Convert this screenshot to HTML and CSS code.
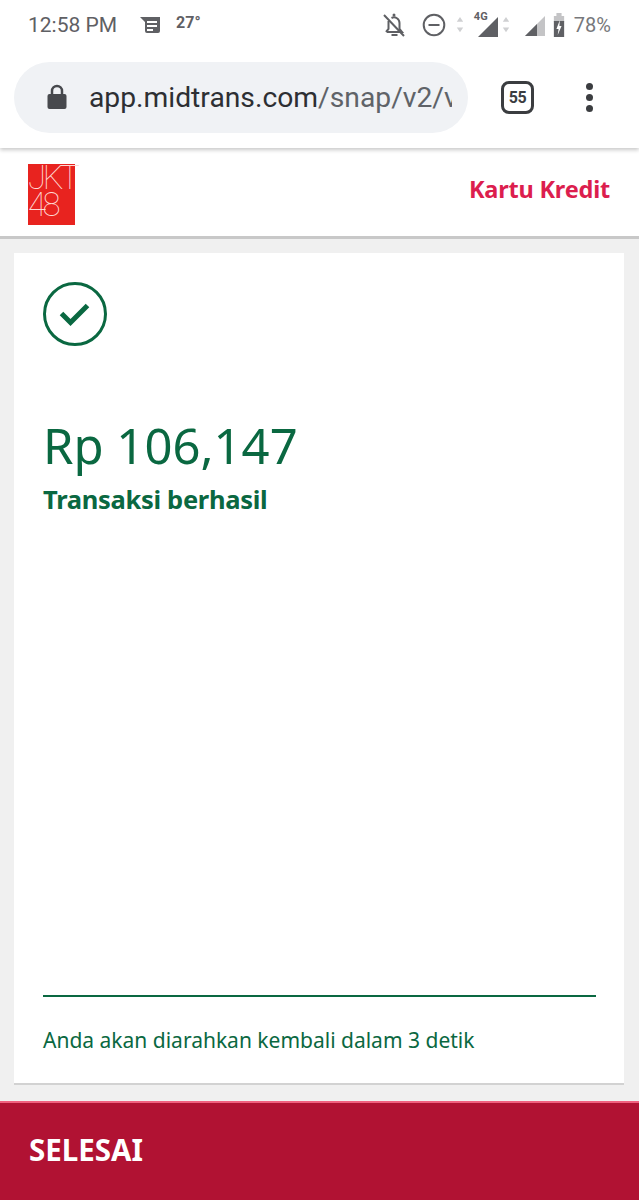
FILE: index.html
```html
<!DOCTYPE html>
<html lang="id">
<head>
    <meta charset="UTF-8">
    <meta name="viewport" content="width=device-width, initial-scale=1.0">
    <title>Transaksi berhasil</title>
    <link rel="stylesheet" href="styles.css">
</head>
<body>
    <div class="statusbar">
        <span class="time">12:58 PM</span>
        <svg class="news-icon" width="22" height="18" viewBox="0 0 22 18">
            <path fill="#5f6064" d="M1 1h20v14a2 2 0 0 1-2 2H8a2 2 0 0 1-2-2V6z"/>
            <path stroke="#fff" stroke-width="2" d="M8 6h10M8 10h10M8 14h6"/>
        </svg>
        <span class="temp">27°</span>
        <span class="spacer"></span>
        <svg class="bell-icon" width="24" height="26" viewBox="0 0 24 26">
            <path fill="none" stroke="#5f6064" stroke-width="2" d="M5 20h15l-2.500-3v-6a5.500 5.500 0 0 0-8-5M6.500 9v8L4 20"/>
            <path stroke="#5f6064" stroke-width="2" d="M2 3l20 21M9.500 23h6"/>
            <circle cx="12" cy="3" r="1.500" fill="#5f6064"/>
        </svg>
        <svg class="dnd-icon" width="24" height="24" viewBox="0 0 24 24">
            <circle cx="12" cy="12" r="10.300" fill="none" stroke="#5f6064" stroke-width="2"/>
            <path stroke="#5f6064" stroke-width="2" d="M6.500 12h11"/>
        </svg>
        <svg class="arrows arrows-first" width="8" height="18" viewBox="0 0 10 22">
            <path fill="#cfd0d2" d="M5 1l4 6H1zM1 14h8l-4 6z"/>
        </svg>
        <div class="signal-4g">
            <span class="net">4G</span>
            <svg width="22" height="22" viewBox="0 0 22 22"><path fill="#5f6064" d="M21 1v20H1z"/></svg>
        </div>
        <svg class="arrows" width="8" height="18" viewBox="0 0 10 22">
            <path fill="#cfd0d2" d="M5 1l4 6H1zM1 14h8l-4 6z"/>
        </svg>
        <svg class="signal-2" width="22" height="22" viewBox="0 0 22 22">
            <path fill="#c4c4c6" d="M21 1v20H1z"/>
            <path fill="#5f6064" d="M13 9v12H1z"/>
        </svg>
        <svg class="battery" width="12" height="24" viewBox="0 0 14 24" preserveAspectRatio="none">
            <path fill="#c4c4c6" d="M4 0h6v3h3v6H1V3h3z"/>
            <path fill="#5f6064" d="M1 8h12v16H1z"/>
            <path fill="#fff" d="M8 7l-4 9h2.500L5.500 22 10 13H7.500z"/>
        </svg>
        <span class="battery-pct">78%</span>
    </div>

    <div class="toolbar">
        <div class="urlbar">
            <svg class="lock" width="20" height="26" viewBox="0 0 20 26">
                <path fill="none" stroke="#47494d" stroke-width="2.500" d="M5 11V7a5 5 0 0 1 10 0v4"/>
                <rect x="0.500" y="10" width="19" height="15" rx="2" fill="#47494d"/>
            </svg>
            <div class="url"><span class="host">app.midtrans.com</span>/snap/v2/v</div>
        </div>
        <div class="tabs">55</div>
        <div class="menu"><i></i><i></i><i></i></div>
    </div>

    <div class="header">
        <div class="logo"><span>JKT</span><span>48</span></div>
        <div class="method">Kartu Kredit</div>
    </div>

    <div class="content">
        <div class="card">
            <svg class="check" width="64" height="64" viewBox="0 0 64 64">
                <circle cx="32" cy="32" r="30.500" fill="none" stroke="#0a6841" stroke-width="3"/>
                <path fill="none" stroke="#0a6841" stroke-width="5" d="M18.500 31.500l9 9 17-17"/>
            </svg>
            <div class="amount">Rp 106,147</div>
            <div class="status">Transaksi berhasil</div>
            <div class="redirect">Anda akan diarahkan kembali dalam 3 detik</div>
        </div>
    </div>

    <div class="footer">SELESAI</div>
</body>
</html>
```

FILE: styles.css
```css
* {
    box-sizing: border-box;
}
body {
    margin: 0;
    width: 639px;
    height: 1200px;
    overflow: hidden;
    display: flex;
    flex-direction: column;
    background-color: #f0f0f0;
    font-family: "Noto Sans", sans-serif;
}

/* android status bar */
.statusbar {
    height: 50px;
    padding: 0 28px 0 28px;
    display: flex;
    align-items: center;
    background-color: #fff;
    color: #5f6064;
    font-family: Roboto, sans-serif;
    position: relative;
    z-index: 1;
}
.time {
    font-size: 21px;
    margin-right: 22px;
}
.temp {
    font-size: 16px;
    font-weight: 700;
    margin-left: 15px;
    margin-bottom: 4px;
}
.spacer {
    flex: 1;
}
.bell-icon {
    margin-right: 16px;
}
.dnd-icon {
    margin-right: 10px;
}
.arrows-first {
    margin-right: 6px;
}
.signal-4g {
    position: relative;
    width: 30px;
    height: 26px;
    margin: 0 1px;
    display: flex;
    justify-content: flex-end;
    align-items: flex-end;
}
.signal-4g svg {
    margin-right: 2px;
}
.net {
    position: absolute;
    top: -2px;
    left: 3px;
    font-size: 11px;
    font-weight: 700;
}
.signal-2 {
    margin-left: 14px;
    margin-top: 3px;
}
.battery {
    margin-left: 7px;
}
.battery-pct {
    font-size: 20px;
    margin-left: 9px;
    color: #77787b;
}

/* chrome toolbar */
.toolbar {
    height: 98px;
    padding: 12px 30px 15px 14px;
    display: flex;
    align-items: center;
    background-color: #fff;
    box-shadow: 0 2px 4px rgba(0, 0, 0, 0.22);
    position: relative;
}
.urlbar {
    width: 454px;
    height: 71px;
    padding: 0 0 0 33px;
    display: flex;
    align-items: center;
    background-color: #f0f2f5;
    border-radius: 36px;
    overflow: hidden;
}
.lock {
    flex: none;
    margin-right: 22px;
}
.url {
    width: 363px;
    overflow: hidden;
    white-space: nowrap;
    font-family: Roboto, sans-serif;
    font-size: 28.250px;
    color: #5f6368;
}
.host {
    color: #2d2f33;
}
.tabs {
    width: 33px;
    height: 33px;
    margin-left: 33px;
    border: 3px solid #3b3d40;
    border-radius: 8px;
    display: flex;
    align-items: center;
    justify-content: center;
    font-family: Roboto, sans-serif;
    font-size: 16px;
    font-weight: 700;
    letter-spacing: -0.5px;
    color: #3b3d40;
}
.menu {
    margin-left: 52px;
    display: flex;
    flex-direction: column;
    gap: 4px;
}
.menu i {
    width: 7px;
    height: 7px;
    border-radius: 50%;
    background-color: #3b3d40;
}

/* merchant header */
.header {
    height: 91px;
    padding: 16px 29px 11px 28px;
    display: flex;
    justify-content: space-between;
    align-items: center;
    background-color: #fff;
    border-bottom: 3px solid #c8c8c8;
}
.logo {
    width: 47px;
    height: 61px;
    background-color: #e8231f;
    color: #ffd9d4;
    font-family: Roboto, sans-serif;
    font-weight: 100;
    font-size: 33px;
    line-height: 27px;
    letter-spacing: -3.500px;
    display: flex;
    flex-direction: column;
}
.method {
    margin-bottom: 10px;
    color: #dc1e4e;
    font-size: 23.500px;
    font-weight: 700;
    letter-spacing: -0.2px;
}

.content {
    flex: 1;
    padding: 14px 15px 16px 14px;
}
.card {
    height: 832px;
    padding: 29px 28px 0 29px;
    display: flex;
    flex-direction: column;
    background-color: #fff;
    border-bottom: 2px solid #d2d2d2;
    color: #0a6841;
}
.check {
    flex: none;
}
.amount {
    margin-top: 69px;
    font-size: 49px;
    line-height: 60px;
}
.status {
    margin-top: 8px;
    font-size: 25.500px;
    line-height: 32px;
    font-weight: 700;
    letter-spacing: -0.3px;
}
.redirect {
    margin-top: 480px;
    padding-top: 28px;
    border-top: 2px solid #0a6841;
    font-size: 21px;
    line-height: 30px;
}

.footer {
    height: 100px;
    padding: 0 29px 3px;
    display: flex;
    align-items: center;
    background-color: #b11233;
    border-top: 2px solid #f0617f;
    color: #fff;
    font-size: 29.500px;
    font-weight: 700;
}
```
